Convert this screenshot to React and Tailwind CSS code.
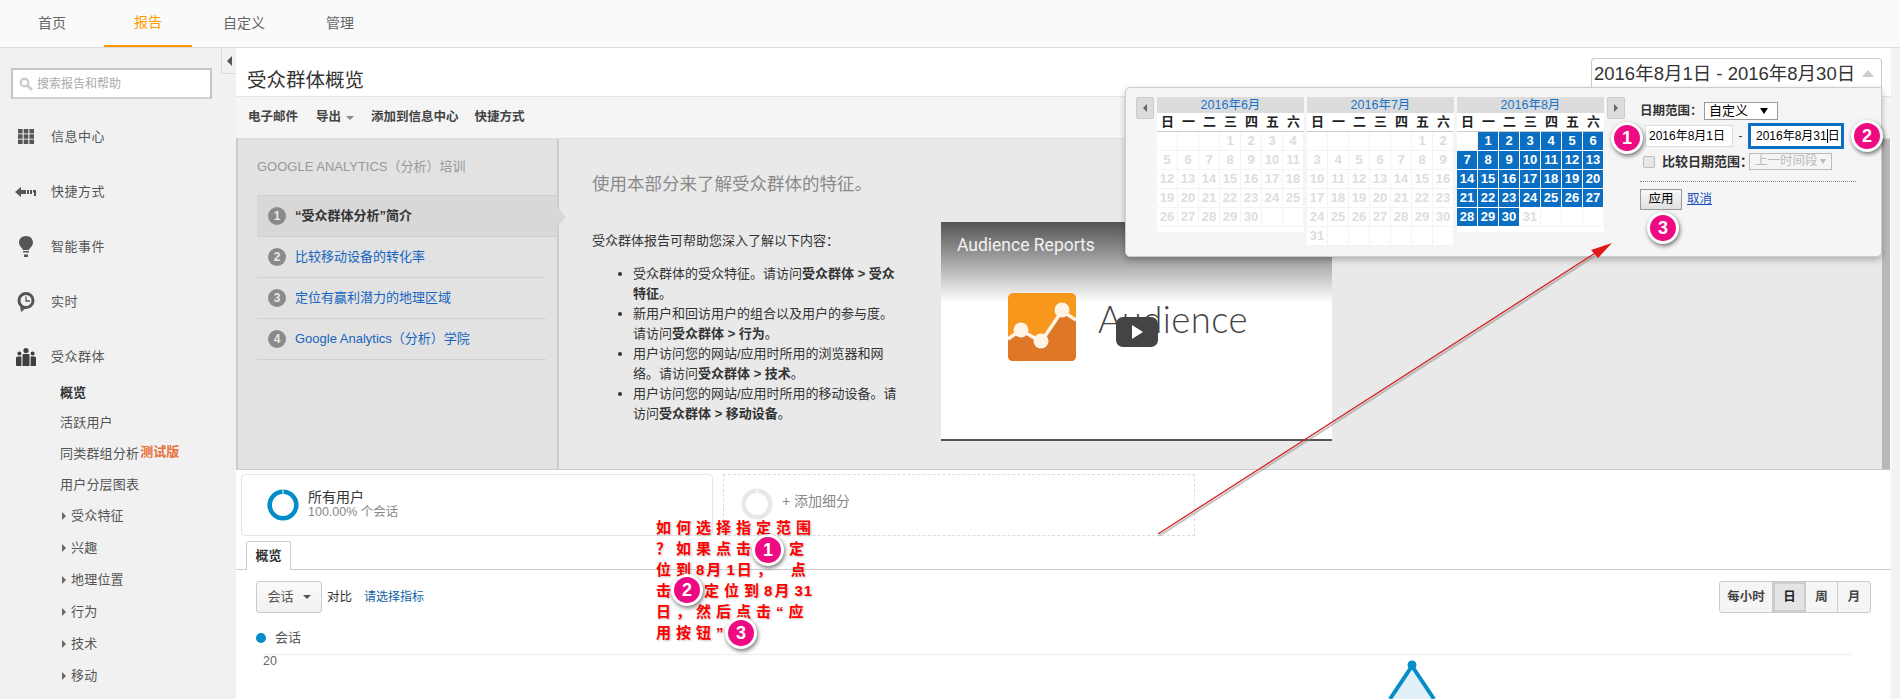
import React from 'react'

const FONT = 'font-["Liberation_Sans","Noto_Sans_CJK_SC",sans-serif]'

const navItems = [
  { label: '首页', w: 'w-[104px] pl-[38px]' },
  { label: '报告', w: 'w-[88px] justify-center', active: true },
  { label: '自定义', w: 'w-[134px] pl-[31px]' },
  { label: '管理', w: 'w-[60px] pl-0' },
]

function GridIcon() {
  return (
    <svg width="16" height="15" viewBox="0 0 16 15" fill="#555">
      <rect x="0" y="0" width="4.6" height="4.4" /><rect x="5.7" y="0" width="4.6" height="4.4" /><rect x="11.4" y="0" width="4.6" height="4.4" />
      <rect x="0" y="5.3" width="4.6" height="4.4" /><rect x="5.7" y="5.3" width="4.6" height="4.4" /><rect x="11.4" y="5.3" width="4.6" height="4.4" />
      <rect x="0" y="10.6" width="4.6" height="4.4" /><rect x="5.7" y="10.6" width="4.6" height="4.4" /><rect x="11.4" y="10.6" width="4.6" height="4.4" />
    </svg>
  )
}

function ShortcutIcon() {
  return (
    <svg width="21" height="10" viewBox="0 0 21 10" fill="#555">
      <path d="M0 5 L6 0 V3 H11 V7 H6 V10 Z" />
      <rect x="12" y="3" width="2" height="4" /><rect x="15" y="3" width="2" height="4" />
      <path d="M18 3 H21 V9 H19 V5.5 H18 Z" />
    </svg>
  )
}

function BulbIcon() {
  return (
    <svg width="14" height="21" viewBox="0 0 14 21" fill="#555">
      <path d="M7 0 C3 0 0 2.8 0 6.5 C0 10 3 11.5 4 14 H10 C11 11.5 14 10 14 6.5 C14 2.8 11 0 7 0 Z" />
      <rect x="4" y="15" width="6" height="1.5" /><rect x="5" y="18.5" width="4" height="2.5" />
    </svg>
  )
}

function ClockIcon() {
  return (
    <svg width="18" height="20" viewBox="0 0 18 20" fill="none">
      <circle cx="9" cy="8.5" r="7" stroke="#555" strokeWidth="3" fill="#f1f1f1" />
      <path d="M3 13 L4 20 L9 16 Z" fill="#555" />
      <path d="M9 4.5 V9 H13" stroke="#555" strokeWidth="1.3" />
    </svg>
  )
}

function PeopleIcon() {
  return (
    <svg width="20" height="20" viewBox="0 0 20 20" fill="#3f3f3f">
      <circle cx="10" cy="3.5" r="2.6" /><circle cx="3.4" cy="6.5" r="2" /><circle cx="16.6" cy="6.5" r="2" />
      <path d="M6.5 8 Q6.5 7 7.5 7 H12.5 Q13.5 7 13.5 8 V19 H6.5 Z" />
      <path d="M0 11 Q0 9.5 1.5 9.5 H5.4 V19 H1 Q0 19 0 18 Z" />
      <path d="M20 11 Q20 9.5 18.5 9.5 H14.6 V19 H19 Q20 19 20 18 Z" />
    </svg>
  )
}

const mainItems = [
  { label: '信息中心', icon: <GridIcon /> },
  { label: '快捷方式', icon: <ShortcutIcon /> },
  { label: '智能事件', icon: <BulbIcon /> },
  { label: '实时', icon: <ClockIcon /> },
  { label: '受众群体', icon: <PeopleIcon /> },
]

const subItems = ['受众特征', '兴趣', '地理位置', '行为', '技术', '移动']

function Sidebar() {
  return (
    <aside className="relative w-[236px] shrink-0 bg-[#f1f1f1]">
      <div className="absolute right-0 top-0 flex h-[26px] w-[15px] items-center justify-center border-b border-l border-[#dcdcdc] bg-[#f1f1f1]">
        <span className="h-0 w-0 border-y-[5px] border-r-[5px] border-y-transparent border-r-[#555]" />
      </div>
      <div className="ml-[11px] mt-[20px] flex h-[31px] w-[201px] items-center gap-[4px] border-2 border-[#c4c4c4] border-b-[#d0d0d0] bg-white pl-[6px] text-[12px] text-[#aaa]">
        <svg width="14" height="14" viewBox="0 0 14 14" fill="none">
          <circle cx="5.5" cy="5.5" r="3.8" stroke="#ccc" strokeWidth="2.4" />
          <path d="M8.5 8.5 L13 13" stroke="#ccc" strokeWidth="2.8" />
        </svg>
        搜索报告和帮助
      </div>
      <div className="mt-[10px]">
        {mainItems.map((item) => (
          <div key={item.label} className="flex h-[55px] items-center text-[13px] text-[#555]">
            <span className="ml-[15px] mr-[15px] flex w-[21px] shrink-0 justify-center">{item.icon}</span>
            <span className="tracking-[0.5px]">{item.label}</span>
          </div>
        ))}
      </div>
      <div className="mt-[-6px] pl-[60px] text-[13px] text-[#555]">
        <div className="flex h-[30px] items-center font-bold text-[#333]">概览</div>
        <div className="flex h-[30px] items-center tracking-[0.2px]">活跃用户</div>
        <div className="flex h-[31px] items-center tracking-[0.2px]">
          同类群组分析
          <span className="ml-[1px] -translate-y-[2px] font-bold tracking-normal text-[#e8703a]">测试版</span>
        </div>
        <div className="flex h-[31px] items-center tracking-[0.2px]">用户分层图表</div>
        {subItems.map((label) => (
          <div key={label} className="flex h-[32px] items-center tracking-[0.2px]">
            <span className="ml-[2px] mr-[5px] h-0 w-0 border-y-[4px] border-l-[4px] border-y-transparent border-l-[#666]" />
            {label}
          </div>
        ))}
      </div>
    </aside>
  )
}

const steps = [
  { n: 1, label: '“受众群体分析”简介', active: true },
  { n: 2, label: '比较移动设备的转化率' },
  { n: 3, label: '定位有赢利潜力的地理区域' },
  { n: 4, label: 'Google Analytics（分析）学院' },
]

function TrainingNav() {
  return (
    <div className="relative w-[321px] shrink-0 border-r-2 border-[#cdcdcd] bg-[#e2e2e2] pl-[19px] pt-[20px]">
      <div className="h-[36px] text-[13px] leading-[16px] text-[#999]">GOOGLE ANALYTICS（分析）培训</div>
      <div className="border-t border-[#cfcfcf]">
        {steps.map((s) => (
          <div
            key={s.n}
            className={
              s.active
                ? 'relative flex h-[41px] items-center border-b border-[#cfcfcf] bg-[#d8d8d8] font-bold text-[#333]'
                : 'mr-[11px] flex h-[41px] items-center border-b border-[#d0d0d0] text-[#1565c0]'
            }
          >
            <span className="ml-[11px] mr-[9px] flex h-[18px] w-[18px] items-center justify-center rounded-full bg-[#8a8a8a] text-[12px] font-bold text-[#e8e8e8]">
              {s.n}
            </span>
            <span className="text-[13px]">{s.label}</span>
            {s.active && (
              <span className="absolute -right-[9px] top-[11px] h-0 w-0 border-y-[10px] border-l-[9px] border-y-transparent border-l-[#d8d8d8]" />
            )}
          </div>
        ))}
      </div>
    </div>
  )
}

function TrainingBody() {
  const b = 'font-bold'
  return (
    <div className="flex flex-1 bg-[#e9e9e9] pl-[33px]">
      <div className="w-[316px] shrink-0 pt-[33px] text-[13px] leading-[20px] text-[#333]">
        <div className="text-[17.5px] leading-[24px] text-[#8a8a8a]">使用本部分来了解受众群体的特征。</div>
        <p className="mt-[35px]">受众群体报告可帮助您深入了解以下内容：</p>
        <ul className="mt-[13px] w-[308px] list-disc pl-[41px]">
          <li>受众群体的受众特征。请访问<span className={b}>受众群体 &gt; 受众<br />特征</span>。</li>
          <li>新用户和回访用户的组合以及用户的参与度。<br />请访问<span className={b}>受众群体 &gt; 行为</span>。</li>
          <li>用户访问您的网站/应用时所用的浏览器和网<br />络。请访问<span className={b}>受众群体 &gt; 技术</span>。</li>
          <li>用户访问您的网站/应用时所用的移动设备。请<br />访问<span className={b}>受众群体 &gt; 移动设备</span>。</li>
        </ul>
      </div>
      <div className="ml-[33px] mt-[83px] flex h-[219px] w-[391px] flex-col border-b-2 border-[#555] bg-white">
        <div className="h-[80px] bg-gradient-to-b from-[#555] to-white pl-[16px] pt-[11px] font-['Roboto',sans-serif] text-[17.5px] leading-[24px] text-[#f2f2f2]">
          Audience Reports
        </div>
        <div className="relative ml-[67px] mt-[-9px] flex items-center">
          <svg width="68" height="68" viewBox="0 0 68 68">
            <rect width="68" height="68" rx="5" fill="#f7981d" />
            <path d="M0 46 L13 37 L33 49 L54 18 L68 27 V63 Q68 68 63 68 H5 Q0 68 0 63 Z" fill="#de7826" />
            <path d="M0 46 L13 37 L33 49 L54 18 L68 27" fill="none" stroke="#fff4e6" strokeWidth="3.5" />
            <circle cx="13" cy="37" r="7.5" fill="#fff4e6" /><circle cx="33" cy="48" r="7.5" fill="#fff4e6" /><circle cx="54" cy="17" r="7.5" fill="#fff4e6" />
          </svg>
          <span className="ml-[22px] -translate-y-[8px] font-['Lato',sans-serif] text-[36.5px] font-light leading-none tracking-[0.4px] text-[#444]">Audience</span>
          <span className="absolute left-[108px] top-[24px] flex h-[30px] w-[42px] items-center justify-center rounded-[7px] bg-[#444]">
            <span className="h-0 w-0 border-y-[7px] border-l-[11px] border-y-transparent border-l-white" />
          </span>
        </div>
      </div>
    </div>
  )
}

const Segment = ({ color, dashed, children }) => (
  <div
    className={
      dashed
        ? 'flex h-[62px] w-[472px] items-center border border-dashed border-[#ddd] pb-[2px] pl-[17px]'
        : 'flex h-[62px] w-[472px] items-center rounded-[4px] border border-[#e5e5e5] pl-[25px]'
    }
  >
    <svg width="32" height="32" viewBox="0 0 32 32" className="shrink-0">
      <circle cx="16" cy="16" r="13.3" fill="none" stroke={color} strokeWidth="4.6" />
      <path d="M16 0.5 V5" stroke="#fff" strokeWidth="1" />
    </svg>
    {children}
  </div>
)

const june = [null, null, null, 1, 2, 3, 4, ...Array.from({ length: 26 }, (_, i) => i + 5)]
const july = [null, null, null, null, null, 1, 2, ...Array.from({ length: 29 }, (_, i) => i + 3)]
const august = [null, 1, 2, 3, 4, 5, 6, ...Array.from({ length: 25 }, (_, i) => i + 7)]
const weekdays = ['日', '一', '二', '三', '四', '五', '六']

function Month({ title, days, selected, rows }) {
  const cells = [...days]
  while (cells.length < rows * 7) cells.push(null)
  return (
    <div className="w-[147px]">
      <div className="h-[16px] bg-[#dcdcdc] text-center text-[12.5px] leading-[16px] text-[#1a73c8]">{title}</div>
      <div className="grid h-[19px] grid-cols-7 border-b border-[#ccc] bg-white text-center text-[13px] font-bold leading-[18px] text-[#222]">
        {weekdays.map((d) => <span key={d}>{d}</span>)}
      </div>
      <div className={rows === 6 ? 'grid grid-cols-7 bg-white' : 'grid grid-cols-7 bg-white pb-[5px]'}>
        {cells.map((d, i) => {
          const on = selected && d && d <= 30
          return (
            <span
              key={i}
              className={
                on
                  ? 'h-[19px] border-r border-b border-white bg-[#0a6fc2] text-center text-[13px] font-bold leading-[18px] text-white'
                  : 'h-[19px] border-r border-b border-[#f3f3f3] text-center text-[13px] font-bold leading-[18px] text-[#ddd]'
              }
            >
              {d}
            </span>
          )
        })}
      </div>
    </div>
  )
}

const Pager = ({ left }) => (
  <div className="flex h-[22px] w-[18px] shrink-0 items-center justify-center rounded-[2px] border border-[#ccc] bg-[#dcdcdc]">
    {left ? (
      <span className="h-0 w-0 border-y-[4px] border-r-[4px] border-y-transparent border-r-[#666]" />
    ) : (
      <span className="h-0 w-0 border-y-[4px] border-l-[4px] border-y-transparent border-l-[#666]" />
    )}
  </div>
)

function DatePopup() {
  return (
    <div className="absolute left-[1125px] top-[87px] flex h-[170px] w-[757px] gap-[3px] rounded-b-[5px] rounded-tl-[5px] border border-[#ccc] bg-[#f5f5f5] pl-[10px] pt-[9px] shadow-[0_3px_6px_rgba(0,0,0,0.25)]">
      <Pager left />
      <Month title="2016年6月" days={june} rows={5} />
      <Month title="2016年7月" days={july} rows={6} />
      <Month title="2016年8月" days={august} selected rows={5} />
      <Pager />
      <div className="ml-[12px] whitespace-nowrap pt-[5px] text-[12.5px] text-[#333]">
        <div className="flex h-[18px] items-center">
          <span className="w-[64px] font-bold">日期范围：</span>
          <span className="flex h-[18px] w-[74px] items-center justify-between border border-[#999] bg-white px-[4px] text-[13px] text-black">
            自定义
            <span className="mr-[5px] h-0 w-0 border-x-[4px] border-t-[6px] border-x-transparent border-t-black" />
          </span>
        </div>
        <div className="mt-[3px] flex h-[26px] items-center text-[12px]">
          <span className="ml-[5px] flex h-[22px] w-[88px] items-center border border-[#ddd] bg-white pl-[3px] text-black">2016年8月1日</span>
          <span className="w-[15px] text-center">-</span>
          <span className="flex h-[26px] w-[96px] items-center border-[3px] border-[#0a6fc2] bg-white pl-[5px] text-black">
            2016年8月31<span className="border-l border-black leading-[14px]">日</span>
          </span>
        </div>
        <div className="mt-[4px] flex h-[17px] items-center pl-[3px]">
          <span className="h-[12px] w-[12px] rounded-[2px] border border-[#bbb] bg-[#e8e8e8]" />
          <span className="ml-[7px] w-[87px] text-[13px] font-bold">比较日期范围：</span>
          <span className="flex h-[17px] w-[83px] items-center justify-between border border-[#bbb] px-[5px] text-[#bbb]">
            上一时间段
            <span className="h-0 w-0 border-x-[3px] border-t-[5px] border-x-transparent border-t-[#bbb]" />
          </span>
        </div>
        <div className="mt-[11px] w-[216px] border-t border-dotted border-[#888]" />
        <div className="mt-[7px] flex items-center">
          <span className="flex h-[21px] w-[42px] items-center justify-center border border-[#999] bg-gradient-to-b from-[#f8f8f8] to-[#e0e0e0] text-black">应用</span>
          <span className="ml-[5px] text-[#1a4fc0] underline">取消</span>
        </div>
      </div>
    </div>
  )
}

const Badge = ({ n, className }) => (
  <span
    className={`absolute flex h-[32px] w-[32px] items-center justify-center rounded-full border-[3px] border-white bg-[#ee0a83] text-[18px] font-bold text-white shadow-[1px_2px_4px_rgba(0,0,0,0.55)] ${className}`}
  >
    {n}
  </span>
)

export default function App() {
  return (
    <div className={`relative h-[699px] w-[1900px] overflow-hidden bg-white ${FONT}`}>
      <nav className="flex h-[48px] border-b border-[#ddd] bg-[#fafafa] text-[14px] text-[#666]">
        {navItems.map((n) => (
          <div
            key={n.label}
            className={
              n.active
                ? `flex ${n.w} items-center border-b-[2px] border-[#f90] text-[#f90]`
                : `flex ${n.w} items-center`
            }
          >
            {n.label}
          </div>
        ))}
      </nav>

      <div className="flex h-[651px]">
        <Sidebar />
        <main className="w-[1655px] shrink-0">
          <div className="flex h-[49px] items-start justify-between border-b border-[#e5e5e5]">
            <h1 className="ml-[11px] mt-[20px] text-[19.5px] leading-[24px] text-[#333]">受众群体概览</h1>
            <div className="mr-[9px] mt-[10px] flex h-[30px] w-[291px] items-center justify-between whitespace-nowrap rounded-t-[4px] border border-b-0 border-[#ccc] pl-[2px] pr-[7px] text-[18.5px] text-[#333]">
              <span>2016年8月1日 - 2016年8月30日</span>
              <span className="h-0 w-0 border-x-[6px] border-b-[7px] border-x-transparent border-b-[#ccc]" />
            </div>
          </div>
          <div className="flex h-[41px] items-center bg-[#f5f5f5] pl-[12px] text-[12.5px] font-bold text-[#444]">
            <span>电子邮件</span>
            <span className="ml-[18px] flex items-center gap-[5px]">
              导出
              <span className="h-0 w-0 border-x-[4px] border-t-[4px] border-x-transparent border-t-[#888]" />
            </span>
            <span className="ml-[17px]">添加到信息中心</span>
            <span className="ml-[16px]">快捷方式</span>
          </div>

          <div className="flex h-[332px] border-y border-b-[#ccc] border-t-[#ddd] border-l-2 border-l-[#ccc]">
            <TrainingNav />
            <TrainingBody />
            <div className="mr-[1px] w-[8px] shrink-0 bg-[#b8b8b8]" />
          </div>

          <div className="mt-[4px] flex gap-[10px] pl-[5px]">
            <Segment color="#058dc7">
              <div className="ml-[9px]">
                <div className="text-[14px] leading-[15px] text-[#333]">所有用户</div>
                <div className="text-[12.5px] leading-[15px] text-[#888]">100.00% 个会话</div>
              </div>
            </Segment>
            <Segment color="#e8e8e8" dashed>
              <span className="mb-[5px] ml-[9px] text-[14px] text-[#888]">+ 添加细分</span>
            </Segment>
          </div>

          <div className="mt-[5px] h-[29px] border-b border-[#ccc] pl-[10px]">
            <div className="flex h-[29px] w-[45px] items-center justify-center rounded-t-[2px] border border-b-0 border-[#ccc] bg-white text-[13px] font-bold text-[#333]">概览</div>
          </div>

          <div className="flex items-start justify-between pl-[20px] pr-[20px] pt-[11px]">
            <div className="flex items-center text-[12.5px]">
              <span className="flex h-[32px] w-[66px] items-center justify-center gap-[9px] rounded-[3px] border border-[#ccc] bg-gradient-to-b from-[#fafafa] to-[#f1f1f1] text-[13px] text-[#555]">
                会话
                <span className="h-0 w-0 border-x-[4px] border-t-[4px] border-x-transparent border-t-[#555]" />
              </span>
              <span className="ml-[5px] text-[#333]">对比</span>
              <span className="ml-[12px] text-[12px] text-[#0b5fa5]">请选择指标</span>
            </div>
            <div className="flex h-[32px] overflow-hidden rounded-[3px] border border-[#ccc] bg-[#f5f5f5] text-[12.5px] font-bold text-[#444]">
              <span className="flex w-[53px] items-center justify-center border-r border-[#ccc]">每小时</span>
              <span className="flex w-[33px] items-center justify-center border-2 border-[#ccc] bg-[#e4e4e4] text-[#222]">日</span>
              <span className="flex w-[32px] items-center justify-center border-r border-[#ccc]">周</span>
              <span className="flex w-[32px] items-center justify-center">月</span>
            </div>
          </div>

          <div className="pl-[20px] pt-[15px]">
            <div className="flex items-center gap-[9px] text-[13px] text-[#555]">
              <span className="h-[10px] w-[10px] rounded-full bg-[#058dc7]" />
              会话
            </div>
            <div className="ml-[6px] mt-[6px] w-[1590px] border-t border-[#eee] text-[12.5px] leading-[13px] text-[#666]">
              <span className="ml-[1px]">20</span>
            </div>
          </div>
        </main>
        <div className="w-[9px] bg-[#f3f3f3]" />
      </div>

      {/* 数据线峰值 */}
      <svg className="absolute left-[1380px] top-[660px]" width="64" height="39" viewBox="0 0 64 39">
        <path d="M10 39 L32 6 L54 39 Z" fill="#e2f1f8" />
        <path d="M10 39 L32 6 L54 39" fill="none" stroke="#058dc7" strokeWidth="4" />
        <circle cx="32" cy="5" r="4.5" fill="#058dc7" />
      </svg>

      <DatePopup />

      {/* 教程标注 */}
      <svg className="pointer-events-none absolute left-0 top-0" width="1900" height="699">
        <line x1="1158" y1="534" x2="1600" y2="250" stroke="#888" strokeOpacity="0.5" strokeWidth="2" transform="translate(1 2)" />
        <line x1="1158" y1="534" x2="1600" y2="250" stroke="#d81e1e" strokeWidth="1.3" />
        <path d="M1612 243 L1591 250 L1598 258 Z" fill="#e01a1a" />
      </svg>

      <div className="absolute left-[656px] top-[517px] whitespace-nowrap text-[15px] font-bold leading-[21px] tracking-[5px] text-[#f00] [text-shadow:1px_1px_2px_rgba(0,0,0,0.25)]">
        如何选择指定范围<br />
        ？如果点击<span className="inline-block w-[33px]" />定<br />
        位到<span className="tracking-[2px]">8</span>月<span className="tracking-[2px]">1</span>日，<span className="inline-block w-[14px]" />点<br />
        击<span className="inline-block w-[28px]" />定位到<span className="tracking-[2px]">8</span>月<span className="tracking-[1px]">31</span><br />
        日，然后点击“应<br />
        用按钮”
      </div>

      <Badge n={1} className="left-[1611px] top-[122px]" />
      <Badge n={2} className="left-[1851px] top-[120px]" />
      <Badge n={3} className="left-[1647px] top-[212px]" />
      <Badge n={1} className="left-[752px] top-[534px]" />
      <Badge n={2} className="left-[671px] top-[574px]" />
      <Badge n={3} className="left-[725px] top-[617px]" />
    </div>
  )
}
